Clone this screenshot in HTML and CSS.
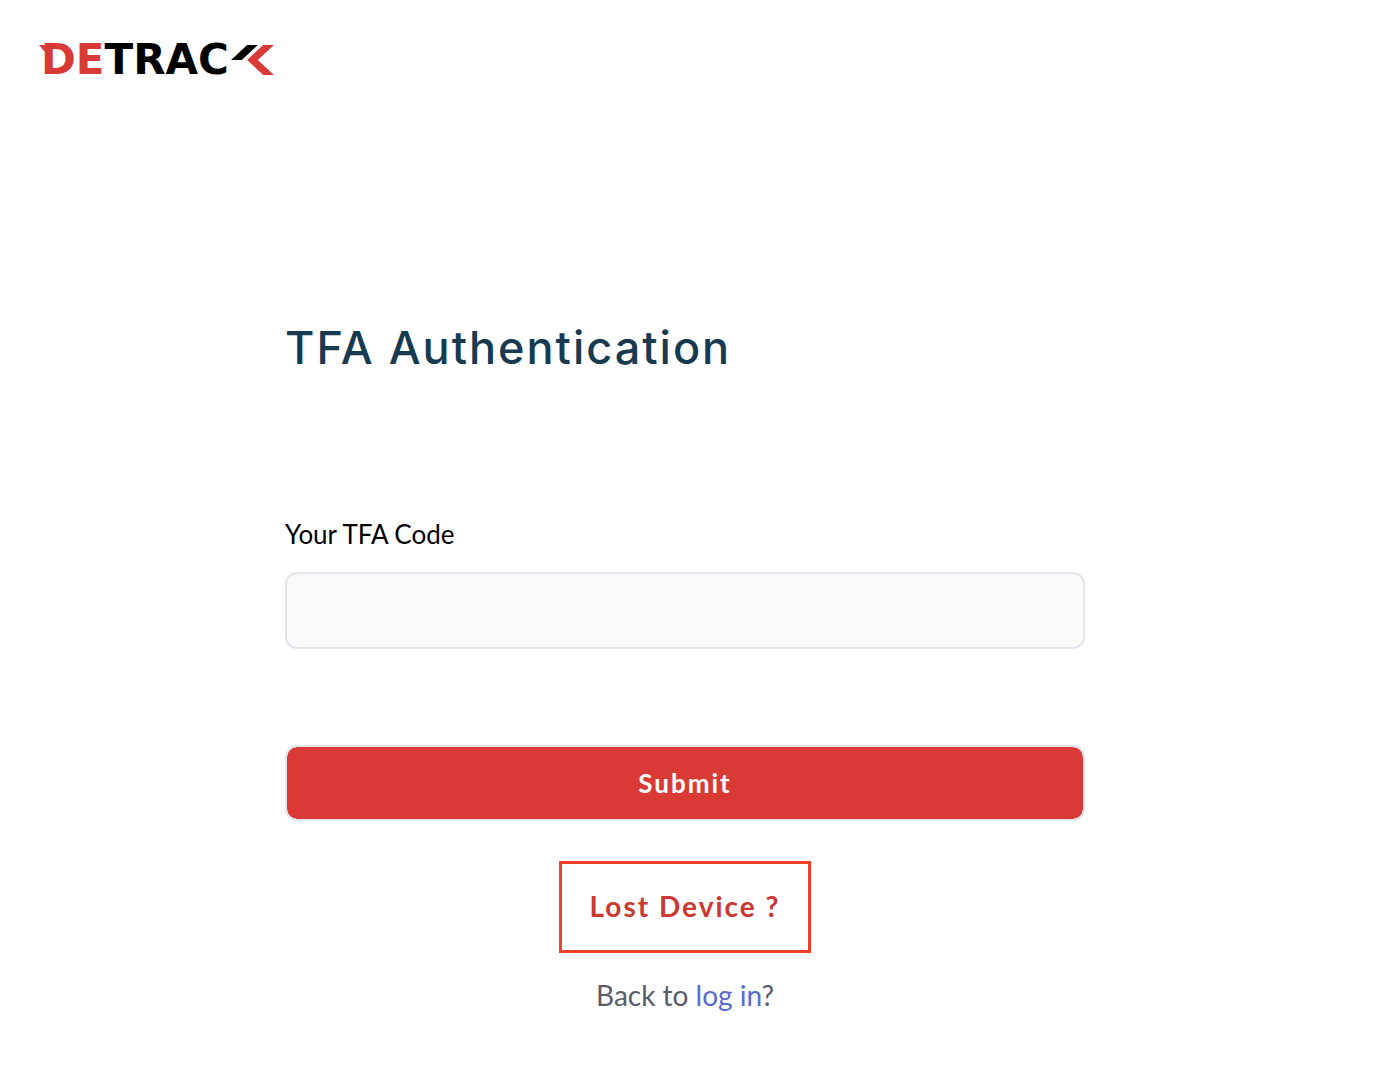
FILE: index.html
```
<!DOCTYPE html>
<html lang="en">
<head>
    <meta charset="UTF-8">
    <meta name="viewport" content="width=device-width, initial-scale=1.0">
    <title>TFA Authentication</title>
    <link rel="stylesheet" href="styles.css">
</head>
<body>
    <header>
        <a href="#" class="logo" aria-label="Detrack">
            <svg class="logo-flare" viewBox="0 0 10 30" aria-hidden="true">
                <polygon points="0,0 10,0 10,6 5,6" fill="#d93a35"/>
            </svg>
            <span class="logo-red">DE</span><span>TRAC</span>
            <svg class="logo-mark" viewBox="0 0 40 28" aria-hidden="true">
                <polygon points="0,14 10,14 25,0 15,0" fill="#000"/>
                <polygon points="40,0 30,0 15,14 30,28 40,28 25,14" fill="#d93a35"/>
            </svg>
        </a>
    </header>

    <main>
        <form class="tfa-form">
            <h1>TFA Authentication</h1>

            <label for="tfa-code">Your TFA Code</label>
            <input type="text" id="tfa-code" name="tfa_code" autocomplete="one-time-code">

            <button type="submit">Submit</button>

            <a href="#" class="lost-device">Lost Device ?</a>
            <p class="back">Back to <a href="#">log in</a>?</p>
        </form>
    </main>
</body>
</html>
```
FILE: styles.css
```
*, *::before, *::after {
    margin: 0;
    padding: 0;
    box-sizing: border-box;
}

body {
    font-family: Lato, "Open Sans", sans-serif;
    font-size: 28px;
    line-height: 36px;
    color: #000;
    background-color: #fff;
}

header {
    padding: 40px 39px;
}

.logo {
    display: flex;
    align-items: center;
    width: fit-content;
    font-family: "DejaVu Sans", sans-serif;
    font-size: 42px;
    font-weight: bold;
    line-height: 40px;
    color: #000;
    text-decoration: none;
}

.logo-red {
    color: #d93a35;
}

.logo-flare {
    width: 10px;
    height: 32px;
    margin-right: -8px;
}

.logo-mark {
    width: 43px;
    height: 30px;
    margin-left: 2px;
}

main {
    padding: 198px 40px 50px 20px;
}

.tfa-form {
    display: flex;
    flex-direction: column;
    max-width: 800px;
    margin: 0 auto;
}

h1 {
    margin-bottom: 138px;
    font-family: Inter, Lato, sans-serif;
    font-size: 45px;
    font-weight: 500;
    line-height: 60px;
    letter-spacing: 2px;
    color: #173a50;
}

label {
    margin-bottom: 20px;
    font-size: 26px;
}

input {
    height: 77px;
    padding: 0 24px;
    font: inherit;
    background-color: #fafafa;
    border: 2px solid #e2e5ed;
    border-radius: 12px;
}

button {
    height: 76px;
    margin-top: 96px;
    font: inherit;
    font-size: 26px;
    font-weight: bold;
    letter-spacing: 2px;
    color: #fff;
    background-color: #d93a35;
    background-clip: padding-box;
    border: 2px solid #e2e5ed;
    border-radius: 12px;
    cursor: pointer;
}

.lost-device {
    align-self: center;
    margin: 40px 0 24px;
    padding: 24px 28px 26px;
    font-weight: bold;
    letter-spacing: 2px;
    color: #cb3731;
    text-decoration: none;
    border: 3px solid #ed4027;
}

.back {
    text-align: center;
    color: #5a5b69;
}

.back a {
    color: #5a6acf;
    text-decoration: none;
}
```
